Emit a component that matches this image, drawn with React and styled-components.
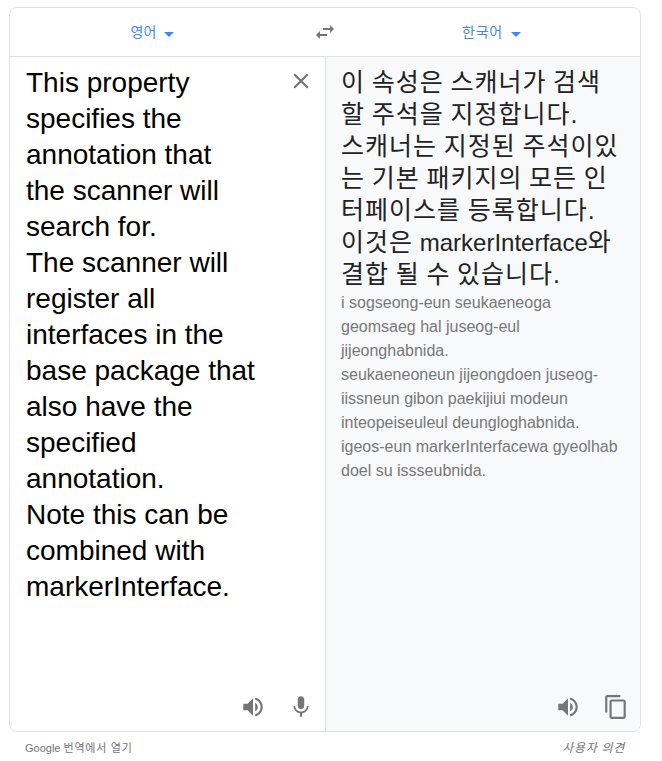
import React from "react";
import styled, { createGlobalStyle } from "styled-components";

const GlobalStyle = createGlobalStyle`
  body { margin: 0; background: #fff; font-family: "Liberation Sans", "Noto Sans CJK KR", sans-serif; }
  * { box-sizing: border-box; }
`;

const Page = styled.main`
  width: 662px;
  height: 761px;
  padding: 7px 21px 0 9px;
  overflow: hidden;
`;

const Card = styled.section`
  height: 725px;
  border: 1px solid #dfe1e5;
  border-radius: 8px;
  overflow: hidden;
  display: flex;
  flex-direction: column;
`;

const LanguageBar = styled.header`
  height: 49px;
  flex: none;
  display: grid;
  grid-template-columns: 285px 60px 1fr;
  align-items: center;
  border-bottom: 1px solid #dfe1e5;
`;

const Language = styled.button`
  border: 0;
  padding: 0;
  background: none;
  display: flex;
  align-items: center;
  justify-content: center;
  gap: 8px;
  color: #4285f4;
  font: 14px/20px "Liberation Sans", "Noto Sans CJK KR", sans-serif;
  letter-spacing: ${(p) => p.$spacing || "0"};
  margin: ${(p) => p.$margin || "0"};
`;

const Caret = styled.span`
  margin-top: 4px;
  border: 5px solid transparent;
  border-top-color: #4285f4;
  border-bottom: 0;
`;

const IconButton = styled.button`
  width: 24px;
  height: 24px;
  padding: 0;
  border: 0;
  background: none;
  color: #757575;
  display: flex;
  align-items: center;
  justify-content: center;
  margin: ${(p) => p.$margin || "0"};

  svg { flex: none; }
`;

const Panels = styled.div`
  flex: 1;
  display: grid;
  grid-template-columns: 315px 1fr;
`;

const Panel = styled.div`
  display: flex;
  flex-direction: column;
  justify-content: space-between;
  background: ${(p) => (p.$result ? "#f8f9fa" : "#fff")};
  border-left: ${(p) => (p.$result ? "1px solid #dfe1e5" : "0")};
  padding: ${(p) => (p.$result ? "9px 0 12px 15px" : "8px 12px 12px 16px")};
`;

const SourceRow = styled.div`
  display: flex;
  justify-content: space-between;
`;

const SourceText = styled.div`
  font-size: 28px;
  line-height: 36px;
  color: #000;
  white-space: pre;
`;

const TranslationLine = styled.div`
  height: 32px;
  font-size: 25px;
  line-height: 32px;
  color: #222;
  white-space: pre;
  letter-spacing: 1px;
  word-spacing: -1.25px;
`;

const Latin = styled.span`
  font-size: 24px;
  letter-spacing: 0;
`;

const Romanization = styled.div`
  margin-top: 1px;
  font-size: 16px;
  line-height: 24px;
  color: #777;
  white-space: pre;
`;

const Actions = styled.div`
  display: flex;
  justify-content: flex-end;
  gap: 24px;
  padding-right: ${(p) => p.$right || "0"};
`;

const Footer = styled.footer`
  display: flex;
  justify-content: space-between;
  padding: 8px 16px 0 16px;
  font-size: 11px;
  line-height: 16px;
  color: #70757a;
`;

const FooterKorean = styled.span`
  letter-spacing: 0.75px;
`;

const Feedback = styled.span`
  font-style: italic;
  font-size: 12px;
  letter-spacing: 0.7px;
`;

const Icon = ({ d, size = 24 }) => (
  <svg width={size} height={size} viewBox="0 0 24 24" fill="currentColor">
    <path d={d} />
  </svg>
);

const SPEAKER =
  "M3 9v6h4l5 5V4L7 9H3zm13.500 3A4.500 4.500 0 0 0 14 7.970v8.050c1.480-.73 2.500-2.250 2.500-4.020zM14 3.230v2.060c2.890.86 5 3.540 5 6.710s-2.110 5.850-5 6.710v2.060c4.010-.91 7-4.490 7-8.770s-2.990-7.860-7-8.770z";
const MIC =
  "M12 14c1.660 0 2.990-1.340 2.990-3L15 5c0-1.660-1.340-3-3-3S9 3.340 9 5v6c0 1.660 1.340 3 3 3zm5.300-3c0 3-2.540 5.100-5.300 5.100S6.700 14 6.700 11H5c0 3.410 2.720 6.230 6 6.720V21h2v-3.280c3.280-.48 6-3.300 6-6.720h-1.700z";
const COPY =
  "M16 1H4c-1.100 0-2 .9-2 2v14h2V3h12V1zm3 4H8c-1.100 0-2 .9-2 2v14c0 1.100.9 2 2 2h11c1.100 0 2-.9 2-2V7c0-1.100-.9-2-2-2zm0 16H8V7h11v14z";
const CLOSE =
  "M19 6.410L17.590 5 12 10.590 6.410 5 5 6.410 10.590 12 5 17.590 6.410 19 12 13.410 17.590 19 19 17.590 13.410 12z";
const SWAP = "M6.990 11L3 15l3.990 4v-3H14v-2H6.990v-3zM21 9l-3.990-4v3H10v2h7.010v3L21 9z";

const source = `This property
specifies the
annotation that
the scanner will
search for.
The scanner will
register all
interfaces in the
base package that
also have the
specified
annotation.
Note this can be
combined with
markerInterface.`;

const romanized = `i sogseong-eun seukaeneoga
geomsaeg hal juseog-eul
jijeonghabnida.
seukaeneoneun jijeongdoen juseog-
iissneun gibon paekijiui modeun
inteopeiseuleul deungloghabnida.
igeos-eun markerInterfacewa gyeolhab
doel su issseubnida.`;

export default function App() {
  return (
    <Page>
      <GlobalStyle />
      <Card>
        <LanguageBar>
          <Language>영어 <Caret /></Language>
          <IconButton aria-label="언어 바꾸기" $margin="0 auto">
            <Icon d={SWAP} />
          </IconButton>
          <Language $spacing="0.8px" $margin="0 12px 0 0">한국어 <Caret /></Language>
        </LanguageBar>
        <Panels>
          <Panel>
            <SourceRow>
              <SourceText>{source}</SourceText>
              <IconButton aria-label="지우기" $margin="4px 0 0">
                <Icon d={CLOSE} size={26} />
              </IconButton>
            </SourceRow>
            <Actions>
              <IconButton aria-label="듣기"><Icon d={SPEAKER} size={26} /></IconButton>
              <IconButton aria-label="음성 입력"><Icon d={MIC} size={26} /></IconButton>
            </Actions>
          </Panel>
          <Panel $result>
            <div>
              <TranslationLine>이 속성은 스캐너가 검색</TranslationLine>
              <TranslationLine>할 주석을 지정합니다.</TranslationLine>
              <TranslationLine>스캐너는 지정된 주석이있</TranslationLine>
              <TranslationLine>는 기본 패키지의 모든 인</TranslationLine>
              <TranslationLine>터페이스를 등록합니다.</TranslationLine>
              <TranslationLine>이것은 <Latin>markerInterface</Latin>와</TranslationLine>
              <TranslationLine>결합 될 수 있습니다.</TranslationLine>
              <Romanization>{romanized}</Romanization>
            </div>
            <Actions $right="12px">
              <IconButton aria-label="번역 듣기"><Icon d={SPEAKER} size={26} /></IconButton>
              <IconButton aria-label="복사"><Icon d={COPY} size={26} /></IconButton>
            </Actions>
          </Panel>
        </Panels>
      </Card>
      <Footer>
        <span>Google <FooterKorean>번역에서 열기</FooterKorean></span>
        <Feedback>사용자 의견</Feedback>
      </Footer>
    </Page>
  );
}
